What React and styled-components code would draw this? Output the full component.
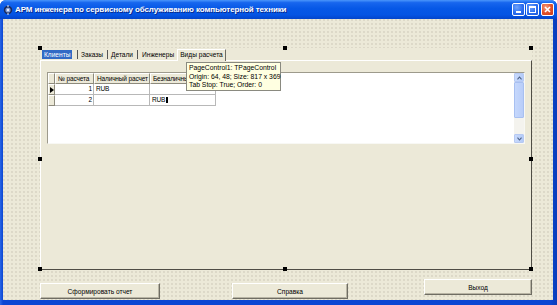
import React from 'react';
import styled, { createGlobalStyle } from 'styled-components';

const Global = createGlobalStyle`
  html, body { margin: 0; padding: 0; background: #ffffff; }
  body { font-family: "Liberation Sans", Arial, sans-serif; }
  * { box-sizing: border-box; }
`;

const Window = styled.div`
  width: 557px;
  height: 305px;
  display: flex;
  flex-direction: column;
  background: #0b46d3;
  border-radius: 6px 6px 0 0;
  overflow: hidden;
`;

const TitleBar = styled.div`
  height: 19px;
  flex: none;
  display: flex;
  align-items: center;
  padding: 0 3px 0 3px;
  background: linear-gradient(to bottom, #4a96fb 0%, #1766ee 14%, #0658e6 45%, #0454e4 78%, #0345cb 100%);
`;

const AppIcon = styled.svg`
  width: 10px;
  height: 10px;
  flex: none;
  margin-right: 2px;
`;

const Title = styled.div`
  color: #ffffff;
  font-weight: bold;
  font-size: 8px;
  letter-spacing: -0.1px;
  white-space: nowrap;
  text-shadow: 1px 1px 0 #0a2a8a;
  flex: 1;
`;

const CaptionButton = styled.div`
  width: 13px;
  height: 13px;
  margin-left: ${p => p.$gap}px;
  border: 1px solid #ffffff;
  border-radius: 2px;
  background: ${p => (p.$close
    ? 'radial-gradient(circle at 35% 30%, #f29a7c, #e0502a 55%, #c8391a)'
    : 'radial-gradient(circle at 35% 30%, #6fa3fb, #2a6ef0 55%, #1b56d8)')};
  position: relative;
  display: flex;
  align-items: center;
  justify-content: center;
`;

const MinGlyph = styled.div`
  position: absolute;
  left: 3px;
  bottom: 2px;
  width: 5px;
  height: 2px;
  background: #ffffff;
`;

const MaxGlyph = styled.div`
  width: 7px;
  height: 7px;
  border: 1px solid #ffffff;
  border-top-width: 2px;
`;

const CloseGlyph = styled.svg`
  width: 7px;
  height: 7px;
`;

const Frame = styled.div`
  flex: 1;
  display: flex;
  padding: 0 4px 5px 3px;
  background: linear-gradient(to right, #2a66e6 0px, #0b46d3 3px, #0b46d3 550px, #0a3cb8 557px);
`;

const Client = styled.div`
  flex: 1;
  display: flex;
  flex-direction: column;
  padding: 29px 0 0 37px;
  background-color: #ece9d8;
  background-image: radial-gradient(circle at 1px 1px, #cdc7b7 0.5px, transparent 0.9px);
  background-size: 4px 4px;
`;

const PageControl = styled.div`
  position: relative;
  width: 492px;
  height: 222px;
  display: flex;
  flex-direction: column;
  background: #ece9d8;
`;

const TabStrip = styled.div`
  height: 12px;
  flex: none;
  display: flex;
  align-items: flex-end;
  padding-left: 2px;
`;

const Tab = styled.div`
  width: ${p => p.$w}px;
  height: 9px;
  font-size: 6.6px;
  color: #000;
  display: flex;
  align-items: center;
  justify-content: ${p => (p.$active ? 'center' : 'flex-start')};
  white-space: nowrap;
  position: relative;
  margin-bottom: 1px;
  padding-left: ${p => p.$pl || 0}px;
  border-right: ${p => (p.$sep ? '1px solid #555' : 'none')};
  ${p => p.$active && `
    border-left: 1px solid #ffffff;
    border-top: 1px solid #ffffff;
    border-right: 1px solid #6e6c62;
    background: #ece9d8;
    margin-bottom: -1px;
    height: 12px;
    padding-bottom: 2px;
    z-index: 1;
  `}
`;

const Highlight = styled.span`
  background: #316ac5;
  color: #ffffff;
  padding: 0 2px;
  line-height: 9px;
`;

const Sheet = styled.div`
  flex: 1;
  display: flex;
  flex-direction: column;
  border-top: 1px solid #ffffff;
  border-left: 1px solid #ffffff;
  border-right: 1px solid #4f4d45;
  border-bottom: 1px solid #4f4d45;
  padding: 11px 6px 0 6px;
`;

const Grid = styled.div`
  height: 72px;
  display: flex;
  background: #ffffff;
  border-top: 1px solid #9d9a8c;
  border-left: 1px solid #9d9a8c;
  border-right: 1px solid #f8f8f4;
  border-bottom: 1px solid #f8f8f4;
`;

const Table = styled.div`
  flex: 1;
  display: flex;
  flex-direction: column;
`;

const Row = styled.div`
  display: flex;
  height: 11px;
`;

const Cell = styled.div`
  width: ${p => p.$w}px;
  flex: none;
  height: 11px;
  font-size: 6.5px;
  letter-spacing: -0.15px;
  line-height: 10px;
  padding: 0 1px 0 2px;
  white-space: nowrap;
  overflow: hidden;
  display: flex;
  align-items: center;
  justify-content: ${p => (p.$right ? 'flex-end' : 'flex-start')};
  ${p => (p.$header
    ? `
    background: #ece9d8;
    border-top: 1px solid #ffffff;
    border-left: 1px solid #ffffff;
    border-right: 1px solid #8d8a7c;
    border-bottom: 1px solid #8d8a7c;
  `
    : `
    background: #ffffff;
    border-right: 1px solid #b8b8b8;
    border-bottom: 1px solid #b8b8b8;
  `)}
`;

const Indicator = styled.div`
  width: 7px;
  flex: none;
  height: 11px;
  background: #ece9d8;
  border-top: 1px solid #ffffff;
  border-left: 1px solid #ffffff;
  border-right: 1px solid #8d8a7c;
  border-bottom: 1px solid #8d8a7c;
  display: flex;
  align-items: center;
  justify-content: center;
`;

const Arrow = styled.div`
  width: 0;
  height: 0;
  border-top: 3.5px solid transparent;
  border-bottom: 3.5px solid transparent;
  border-left: 4px solid #000;
`;

const Caret = styled.span`
  display: inline-block;
  width: 2px;
  height: 6px;
  background: #000;
  margin-left: 1px;
`;

const ScrollBar = styled.div`
  width: 10px;
  flex: none;
  display: flex;
  flex-direction: column;
  background: #f4f3ee;
`;

const ScrollButton = styled.div`
  height: 9px;
  flex: none;
  background: linear-gradient(to right, #c9dafc, #b4cbf8);
  border: 1px solid #b6c9f3;
  border-radius: 1px;
  display: flex;
  align-items: center;
  justify-content: center;
`;

const Chevron = styled.svg`
  width: 5px;
  height: 4px;
`;

const Thumb = styled.div`
  height: 36px;
  flex: none;
  background: linear-gradient(to right, #c6d8fc, #b8cdf9);
  border: 1px solid #a8c0f1;
  border-radius: 1px;
`;

const Track = styled.div`
  flex: 1;
`;

const Tooltip = styled.div`
  position: absolute;
  left: 146px;
  top: 14px;
  width: 95px;
  height: 29px;
  background: #ffffe1;
  border: 1px solid #8a8a80;
  padding: 1px 2px;
  font-size: 6.8px;
  line-height: 8.5px;
  color: #000;
  white-space: nowrap;
  z-index: 3;
`;

const Handle = styled.div`
  position: absolute;
  width: 4px;
  height: 4px;
  background: #000;
  left: ${p => p.$x - 2}px;
  top: ${p => p.$y - 2}px;
  z-index: 4;
`;

const ButtonRow = styled.div`
  display: flex;
  align-items: flex-start;
  margin-top: 9px;
`;

const Button = styled.div`
  width: ${p => p.$w}px;
  height: 16px;
  margin-left: ${p => p.$ml || 0}px;
  margin-top: ${p => p.$mt || 0}px;
  background: #ece9d8;
  border-top: 1px solid #ffffff;
  border-left: 1px solid #ffffff;
  border-right: 1px solid #6f6d63;
  border-bottom: 1px solid #6f6d63;
  box-shadow: inset -1px -1px 0 #b8b4a4;
  font-size: 6.6px;
  color: #000;
  display: flex;
  align-items: center;
  justify-content: center;
  white-space: nowrap;
`;

const handles = [
  [0, 0], [245, 0], [491, 0],
  [0, 111], [491, 111],
  [0, 221], [245, 221], [491, 221],
];

export default function App() {
  return (
    <>
      <Global />
      <Window>
        <TitleBar>
          <AppIcon viewBox="0 0 10 10">
            <circle cx="5" cy="5" r="4.2" fill="#1a2a5a" />
            <circle cx="5" cy="5" r="2.6" fill="#7f9bd6" />
            <circle cx="5" cy="5" r="1.2" fill="#e8eefc" />
            <rect x="4.4" y="0" width="1.2" height="2" fill="#c8d4f0" />
            <rect x="4.4" y="8" width="1.2" height="2" fill="#c8d4f0" />
          </AppIcon>
          <Title>АРМ инженера по сервисному обслуживанию компьютерной техники</Title>
          <CaptionButton $gap={0}><MinGlyph /></CaptionButton>
          <CaptionButton $gap={1}><MaxGlyph /></CaptionButton>
          <CaptionButton $gap={2} $close>
            <CloseGlyph viewBox="0 0 7 7">
              <path d="M1 1 L6 6 M6 1 L1 6" stroke="#fff" strokeWidth="1.6" />
            </CloseGlyph>
          </CaptionButton>
        </TitleBar>
        <Frame>
          <Client>
            <PageControl>
              <TabStrip>
                <Tab $w={36} $sep><Highlight>Клиенты</Highlight></Tab>
                <Tab $w={30} $sep $pl={3}>Заказы</Tab>
                <Tab $w={30} $sep $pl={3}>Детали</Tab>
                <Tab $w={39} $pl={4}>Инженеры</Tab>
                <Tab $w={49} $active>Виды расчета</Tab>
              </TabStrip>
              <Sheet>
                <Grid>
                  <Table>
                    <Row>
                      <Indicator />
                      <Cell $w={39} $header>№ расчета</Cell>
                      <Cell $w={56} $header>Наличный расчет</Cell>
                      <Cell $w={66} $header>Безналичный расчет</Cell>
                    </Row>
                    <Row>
                      <Indicator><Arrow /></Indicator>
                      <Cell $w={39} $right>1</Cell>
                      <Cell $w={56}>RUB</Cell>
                      <Cell $w={66}></Cell>
                    </Row>
                    <Row>
                      <Indicator />
                      <Cell $w={39} $right>2</Cell>
                      <Cell $w={56}></Cell>
                      <Cell $w={66}>RUB<Caret /></Cell>
                    </Row>
                  </Table>
                  <ScrollBar>
                    <ScrollButton>
                      <Chevron viewBox="0 0 5 4">
                        <path d="M0.5 3.3 L2.5 1 L4.5 3.3" stroke="#4d6185" strokeWidth="1.1" fill="none" />
                      </Chevron>
                    </ScrollButton>
                    <Thumb />
                    <Track />
                    <ScrollButton>
                      <Chevron viewBox="0 0 5 4">
                        <path d="M0.5 0.7 L2.5 3 L4.5 0.7" stroke="#4d6185" strokeWidth="1.1" fill="none" />
                      </Chevron>
                    </ScrollButton>
                  </ScrollBar>
                </Grid>
              </Sheet>
              <Tooltip>
                PageControl1: TPageControl<br />
                Origin: 64, 48; Size: 817 x 369<br />
                Tab Stop: True; Order: 0
              </Tooltip>
              {handles.map(([x, y], i) => (
                <Handle key={i} $x={x} $y={y} />
              ))}
            </PageControl>
            <ButtonRow>
              <Button $w={120} $mt={4}>Сформировать отчет</Button>
              <Button $w={116} $ml={72} $mt={4}>Справка</Button>
              <Button $w={108} $ml={76}>Выход</Button>
            </ButtonRow>
          </Client>
        </Frame>
      </Window>
    </>
  );
}
